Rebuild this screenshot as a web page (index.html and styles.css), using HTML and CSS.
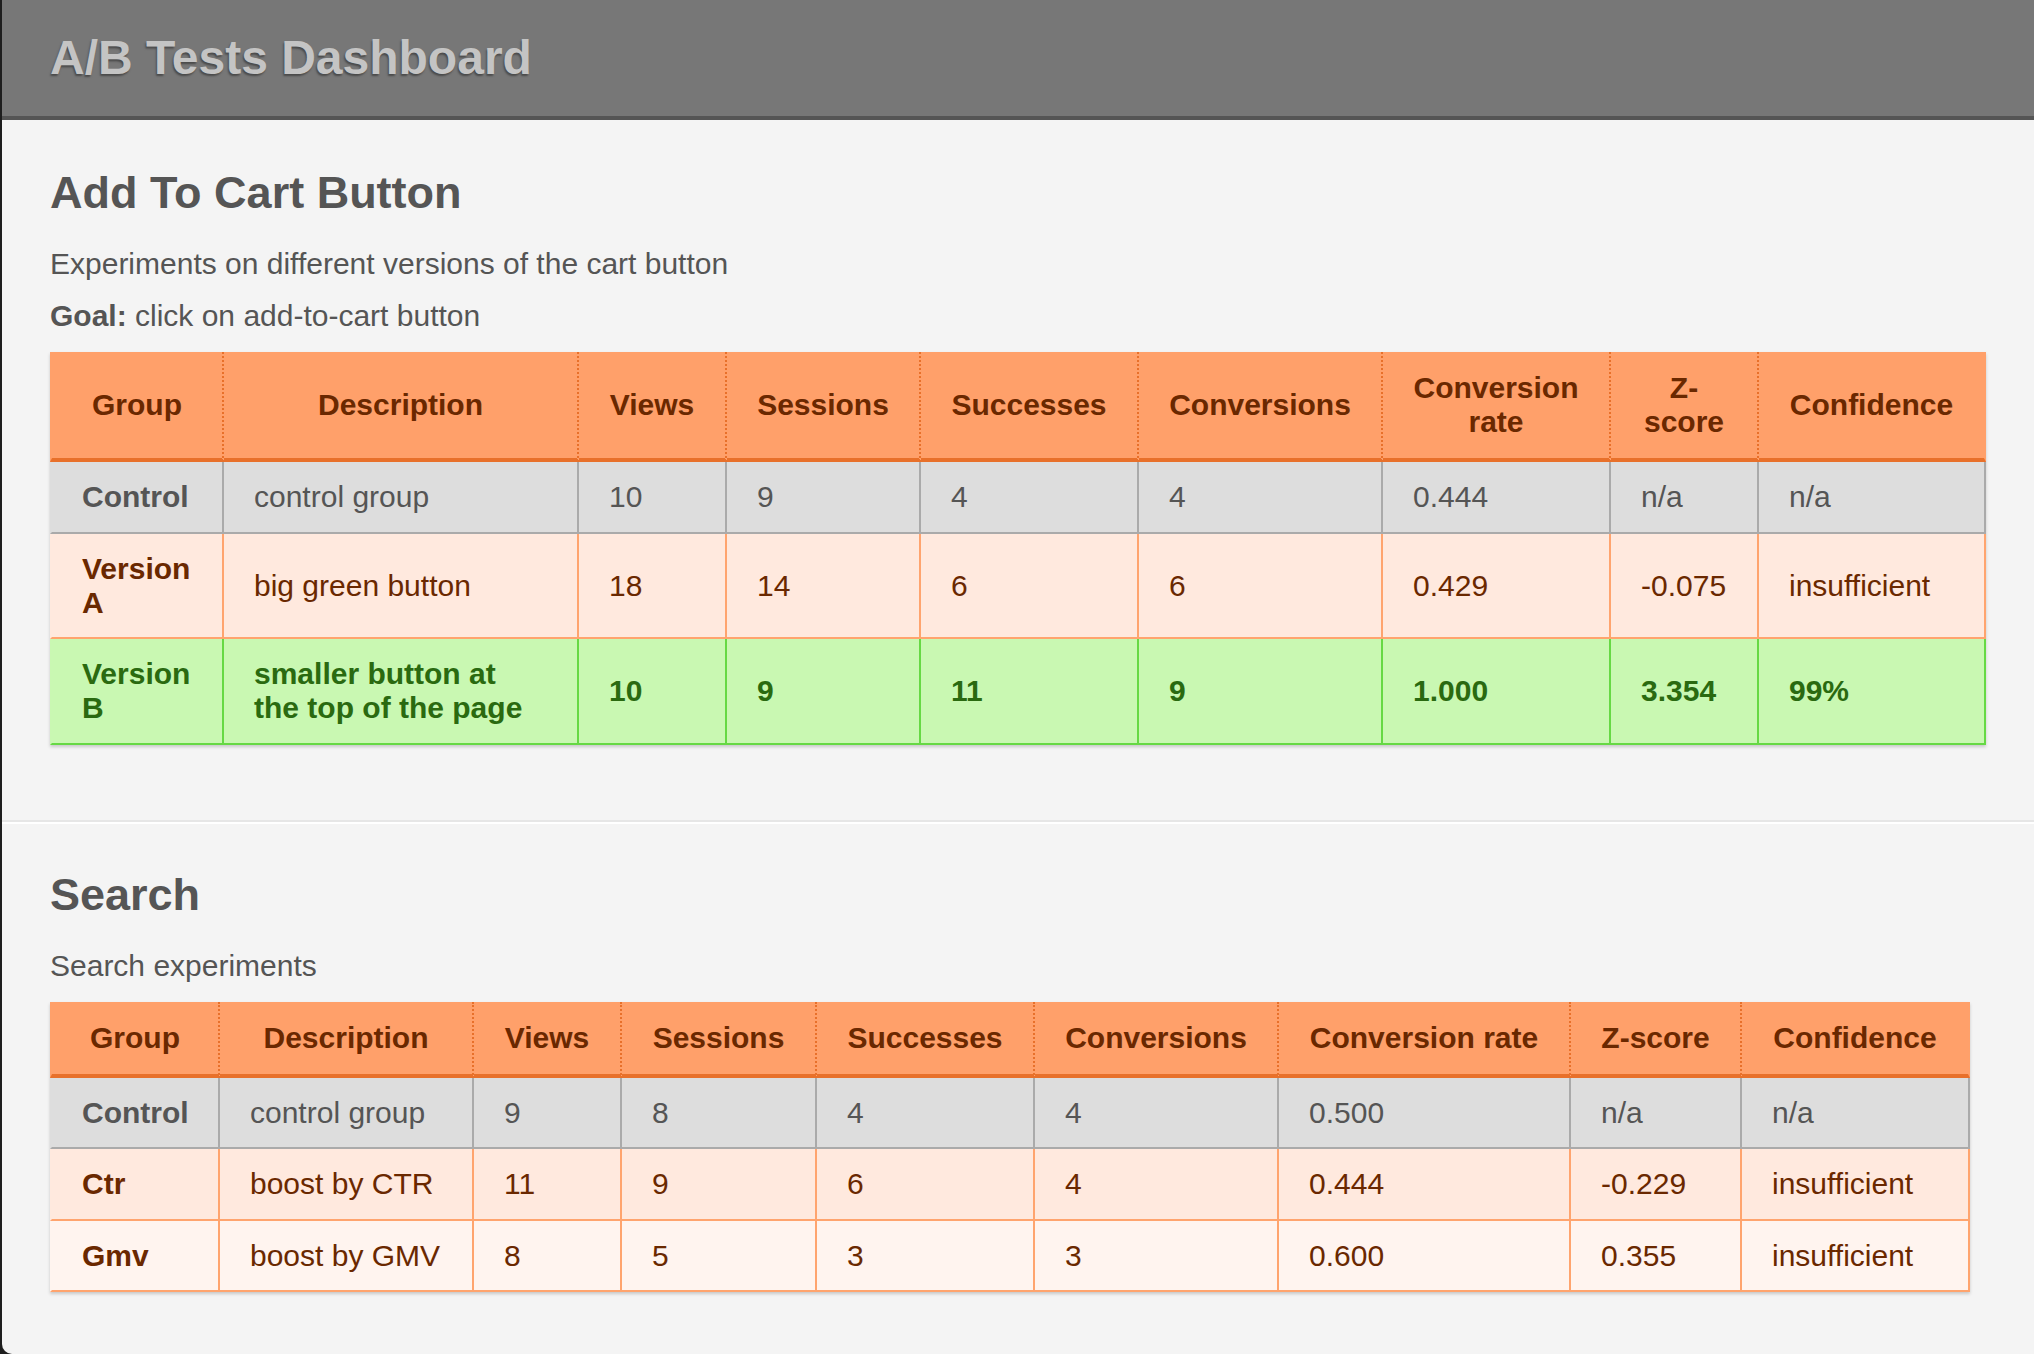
FILE: index.html
```html
<!DOCTYPE html>
<html lang="en">
<head>
<meta charset="utf-8">
<title>A/B Tests Dashboard</title>
<link rel="stylesheet" href="styles.css">
</head>
<body>
<header class="topbar">
  <h1 class="topbar-title">A/B Tests Dashboard</h1>
</header>

<section class="experiment">
  <h2 class="experiment-title">Add To Cart Button</h2>
  <p class="experiment-text">Experiments on different versions of the cart button</p>
  <p class="experiment-text"><strong>Goal:</strong> click on add-to-cart button</p>
  <table class="results results-cart">
    <colgroup>
      <col><col><col><col><col><col><col><col><col>
    </colgroup>
    <thead>
      <tr>
        <th>Group</th><th>Description</th><th>Views</th><th>Sessions</th><th>Successes</th><th>Conversions</th><th>Conversion rate</th><th>Z-score</th><th>Confidence</th>
      </tr>
    </thead>
    <tbody>
      <tr class="row-control">
        <td class="group">Control</td><td>control group</td><td>10</td><td>9</td><td>4</td><td>4</td><td>0.444</td><td>n/a</td><td>n/a</td>
      </tr>
      <tr class="row-variant">
        <td class="group">Version A</td><td>big green button</td><td>18</td><td>14</td><td>6</td><td>6</td><td>0.429</td><td>-0.075</td><td>insufficient</td>
      </tr>
      <tr class="row-winner">
        <td class="group">Version B</td><td>smaller button at the top of the page</td><td>10</td><td>9</td><td>11</td><td>9</td><td>1.000</td><td>3.354</td><td>99%</td>
      </tr>
    </tbody>
  </table>
</section>

<section class="experiment">
  <h2 class="experiment-title">Search</h2>
  <p class="experiment-text">Search experiments</p>
  <table class="results results-search">
    <colgroup>
      <col><col><col><col><col><col><col><col><col>
    </colgroup>
    <thead>
      <tr>
        <th>Group</th><th>Description</th><th>Views</th><th>Sessions</th><th>Successes</th><th>Conversions</th><th>Conversion rate</th><th>Z-score</th><th>Confidence</th>
      </tr>
    </thead>
    <tbody>
      <tr class="row-control">
        <td class="group">Control</td><td>control group</td><td>9</td><td>8</td><td>4</td><td>4</td><td>0.500</td><td>n/a</td><td>n/a</td>
      </tr>
      <tr class="row-variant">
        <td class="group">Ctr</td><td>boost by CTR</td><td>11</td><td>9</td><td>6</td><td>4</td><td>0.444</td><td>-0.229</td><td>insufficient</td>
      </tr>
      <tr class="row-variant row-alt">
        <td class="group">Gmv</td><td>boost by GMV</td><td>8</td><td>5</td><td>3</td><td>3</td><td>0.600</td><td>0.355</td><td>insufficient</td>
      </tr>
    </tbody>
  </table>
</section>
</body>
</html>
```

FILE: styles.css
```css
html {
  background: #1e1e1e;
  margin: 0;
  padding: 0;
}

body {
  margin: 0 0 0 2px;
  min-height: 100vh;
  background: #f4f4f4;
  border-bottom-left-radius: 10px;
  font-family: "Liberation Sans", Arial, Helvetica, sans-serif;
  color: #555555;
}

.topbar {
  background: #777777;
  border-bottom: 4px solid #555555;
  padding: 30px 48px 31px;
}

.topbar-title {
  margin: 0;
  font-size: 48px;
  line-height: 55px;
  font-weight: bold;
  color: #c4c4c4;
  text-shadow: -1px 2px 2px #4a4a4a;
}

.experiment {
  padding: 47px 48px 75px;
  border-bottom: 2px solid #e6e6e6;
  border-top: 2px solid #ffffff;
}

.experiment:first-of-type {
  border-top: 0;
}

.experiment:last-of-type {
  border-bottom: 0;
  padding-top: 45px;
  padding-bottom: 40px;
}

.experiment-title {
  margin: 0 0 19px;
  font-size: 45px;
  line-height: 52px;
  font-weight: bold;
  color: #555555;
}

.experiment-text {
  margin: 0;
  font-size: 30px;
  line-height: 52px;
  color: #555555;
}

.experiment-text strong {
  font-weight: bold;
}

.results {
  margin-top: 10px;
  border-collapse: separate;
  border-spacing: 0;
  table-layout: fixed;
  box-shadow: 0 2px 3px rgba(0, 0, 0, 0.18);
  font-size: 30px;
  line-height: 34px;
}

.results-cart {
  width: 1936px;
}

.results-search {
  width: 1920px;
}

.results-cart col:nth-child(1) { width: 174px; }
.results-cart col:nth-child(2) { width: 355px; }
.results-cart col:nth-child(3) { width: 148px; }
.results-cart col:nth-child(4) { width: 194px; }
.results-cart col:nth-child(5) { width: 218px; }
.results-cart col:nth-child(6) { width: 244px; }
.results-cart col:nth-child(7) { width: 228px; }
.results-cart col:nth-child(8) { width: 148px; }
.results-cart col:nth-child(9) { width: 227px; }

.results-search col:nth-child(1) { width: 170px; }
.results-search col:nth-child(2) { width: 254px; }
.results-search col:nth-child(3) { width: 148px; }
.results-search col:nth-child(4) { width: 195px; }
.results-search col:nth-child(5) { width: 218px; }
.results-search col:nth-child(6) { width: 244px; }
.results-search col:nth-child(7) { width: 292px; }
.results-search col:nth-child(8) { width: 171px; }
.results-search col:nth-child(9) { width: 228px; }

.results th {
  background: #ffa06a;
  color: #6a2800;
  font-weight: bold;
  text-align: center;
  vertical-align: middle;
  padding: 19px 20px;
  border-bottom: 4px solid #e8702a;
  border-right: 2px dotted #e8702a;
}

.results th:first-child {
  border-left: 2px solid #ffa06a;
}

.results th:last-child {
  border-right: 2px solid #ffa06a;
}

.results td {
  padding: 18px 30px 17.5px;
  text-align: left;
  vertical-align: middle;
  border-right: 2px solid transparent;
  border-bottom: 2px solid transparent;
}

.results td:first-child {
  border-left: 2px solid transparent;
}

.results td.group {
  font-weight: bold;
}

.row-control td {
  background: #dddddd;
  color: #555555;
  border-color: #aaaaaa;
}

.row-variant td {
  background: #ffe9de;
  color: #6a2800;
  border-color: #ffa46e;
}

.row-alt td {
  background: #fff4ef;
}

.row-winner td {
  background: #c9f8b2;
  color: #2a6a10;
  font-weight: bold;
  border-color: #66d944;
}
```
